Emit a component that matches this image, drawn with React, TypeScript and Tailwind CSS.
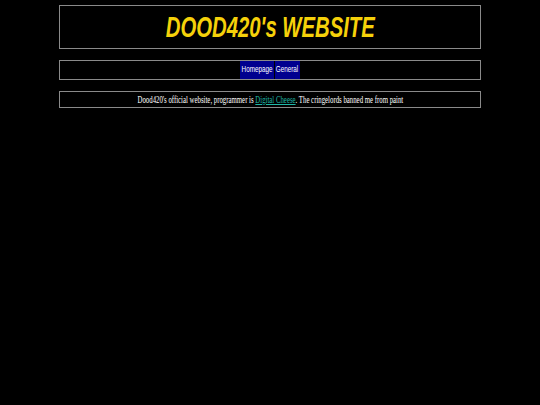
export default function App() {
  return (
    <div className="min-h-[405px] w-full bg-black pt-[5px]">
      <div className="mx-[59px] flex flex-col gap-[11px]">
        <header className="flex h-[44px] items-center justify-center border border-[#8a8a8a]">
          <h1 className="inline-block origin-center scale-x-[0.7] text-[29px] font-bold italic leading-none text-[#f5d10a] [font-family:'Liberation_Sans',sans-serif]">
            DOOD420's WEBSITE
          </h1>
        </header>

        <nav className="flex h-[20px] items-center justify-center gap-[1px] border border-[#8a8a8a]">
          {[
            { l: 'Homepage', w: 'w-[34px]' },
            { l: 'General', w: 'w-[25px]' },
          ].map((b) => (
            <a
              key={b.l}
              href="#"
              className={`flex h-[18px] items-center justify-center overflow-visible bg-[#00008f] text-white ${b.w}`}
            >
              <span className="inline-block scale-x-[0.7] whitespace-nowrap text-[9px] [font-family:'Liberation_Sans',sans-serif]">
                {b.l}
              </span>
            </a>
          ))}
        </nav>

        <div className="flex h-[17px] items-center justify-center border border-[#8a8a8a]">
          <p className="whitespace-nowrap text-[10px] text-white [font-family:'Liberation_Serif',serif]">
            <span className="inline-block scale-x-[0.68]">
              Dood420's official website, programmer is{' '}
              <a href="#" className="text-[#1fb8a8] underline">Digital Cheese</a>. The cringelords banned me from paint
            </span>
          </p>
        </div>
      </div>
    </div>
  );
}
